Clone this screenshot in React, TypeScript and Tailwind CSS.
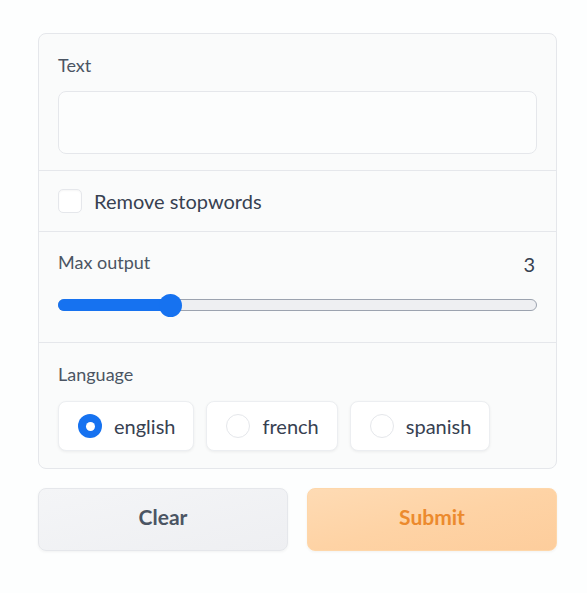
import { useState } from 'react';

const languages = ['english', 'french', 'spanish'];

export default function App() {
  const [lang, setLang] = useState('english');
  const [checked, setChecked] = useState(false);
  const value = 3;
  const pct = 23.5;

  return (
    <div
      className="min-h-screen w-full bg-[#fdfefe] pt-[33px] px-[38px]"
      style={{ fontFamily: 'Lato, "Noto Sans", sans-serif' }}
    >
      <div className="w-[519px]">
        {/* Formulário */}
        <div className="rounded-[8px] border border-[#e5e7eb] bg-[#fafbfb] overflow-hidden">
          <div className="px-[19px] pt-[19px] pb-[16px] border-b border-[#e5e7eb]">
            <div className="text-[18px] text-[#4b5563] leading-[24px] mb-[14px]">Text</div>
            <textarea
              className="block w-full h-[63px] resize-none rounded-[8px] border border-[#e5e7eb] bg-[#fcfdfd] outline-none"
            />
          </div>

          <label className="flex items-center gap-[12px] px-[19px] h-[61px] border-b border-[#e5e7eb] cursor-pointer">
            <span
              onClick={() => setChecked(!checked)}
              className="w-[24px] h-[24px] rounded-[5px] border border-[#e5e7eb] bg-white shadow-[inset_0_1px_2px_rgba(0,0,0,0.04)]"
            />
            <span className="text-[20px] text-[#374151]">Remove stopwords</span>
          </label>

          <div className="px-[19px] pt-[18px] pb-[25px] border-b border-[#e5e7eb]">
            <div className="flex items-start justify-between">
              <span className="text-[18px] text-[#4b5563] leading-[24px]">Max output</span>
              <span className="text-[20px] text-[#374151] leading-[24px] mt-[2px] mr-[2px]">{value}</span>
            </div>
            <div className="relative mt-[17px] h-[24px] flex items-center">
              <div className="w-full h-[12px] rounded-full bg-[#eeeff2] border border-[#9ca3af]" />
              <div
                className="absolute left-0 h-[12px] rounded-full bg-[#1672f0]"
                style={{ width: `${pct}%` }}
              />
              <div
                className="absolute w-[23px] h-[23px] rounded-full bg-[#1672f0]"
                style={{ left: `calc(${pct}% - 12px)` }}
              />
            </div>
          </div>

          <div className="px-[19px] pt-[19px] pb-[17px]">
            <div className="text-[18px] text-[#4b5563] leading-[24px] mb-[15px]">Language</div>
            <div className="flex gap-[12px]">
              {languages.map((l) => {
                const active = l === lang;
                return (
                  <button
                    key={l}
                    onClick={() => setLang(l)}
                    className="flex items-center gap-[12px] h-[50px] pl-[19px] pr-[18px] rounded-[8px] border border-[#eceef1] bg-white shadow-[0_1px_3px_rgba(0,0,0,0.06)]"
                  >
                    {active ? (
                      <span className="w-[24px] h-[24px] rounded-full bg-[#1672f0] flex items-center justify-center">
                        <span className="w-[9px] h-[9px] rounded-full bg-white" />
                      </span>
                    ) : (
                      <span className="w-[24px] h-[24px] rounded-full border border-[#e5e7eb] bg-white" />
                    )}
                    <span className="text-[20px] text-[#374151]">{l}</span>
                  </button>
                );
              })}
            </div>
          </div>
        </div>

        {/* Botões */}
        <div className="flex gap-[19px] mt-[19px]">
          <button className="flex-1 h-[63px] pb-[5px] rounded-[8px] border border-[#e5e7eb] bg-gradient-to-br from-[#f4f5f7] to-[#eeeff2] text-[21px] font-bold text-[#4b5563] shadow-[0_1px_3px_rgba(0,0,0,0.05)]">
            Clear
          </button>
          <button className="flex-1 h-[63px] pb-[5px] rounded-[8px] border border-[#fed7aa] bg-gradient-to-br from-[#fedbb4] via-[#fed3a5] to-[#fdcd9c] text-[21px] font-bold text-[#ec8a2d] shadow-[0_1px_3px_rgba(0,0,0,0.05)]">
            Submit
          </button>
        </div>
      </div>
    </div>
  );
}
